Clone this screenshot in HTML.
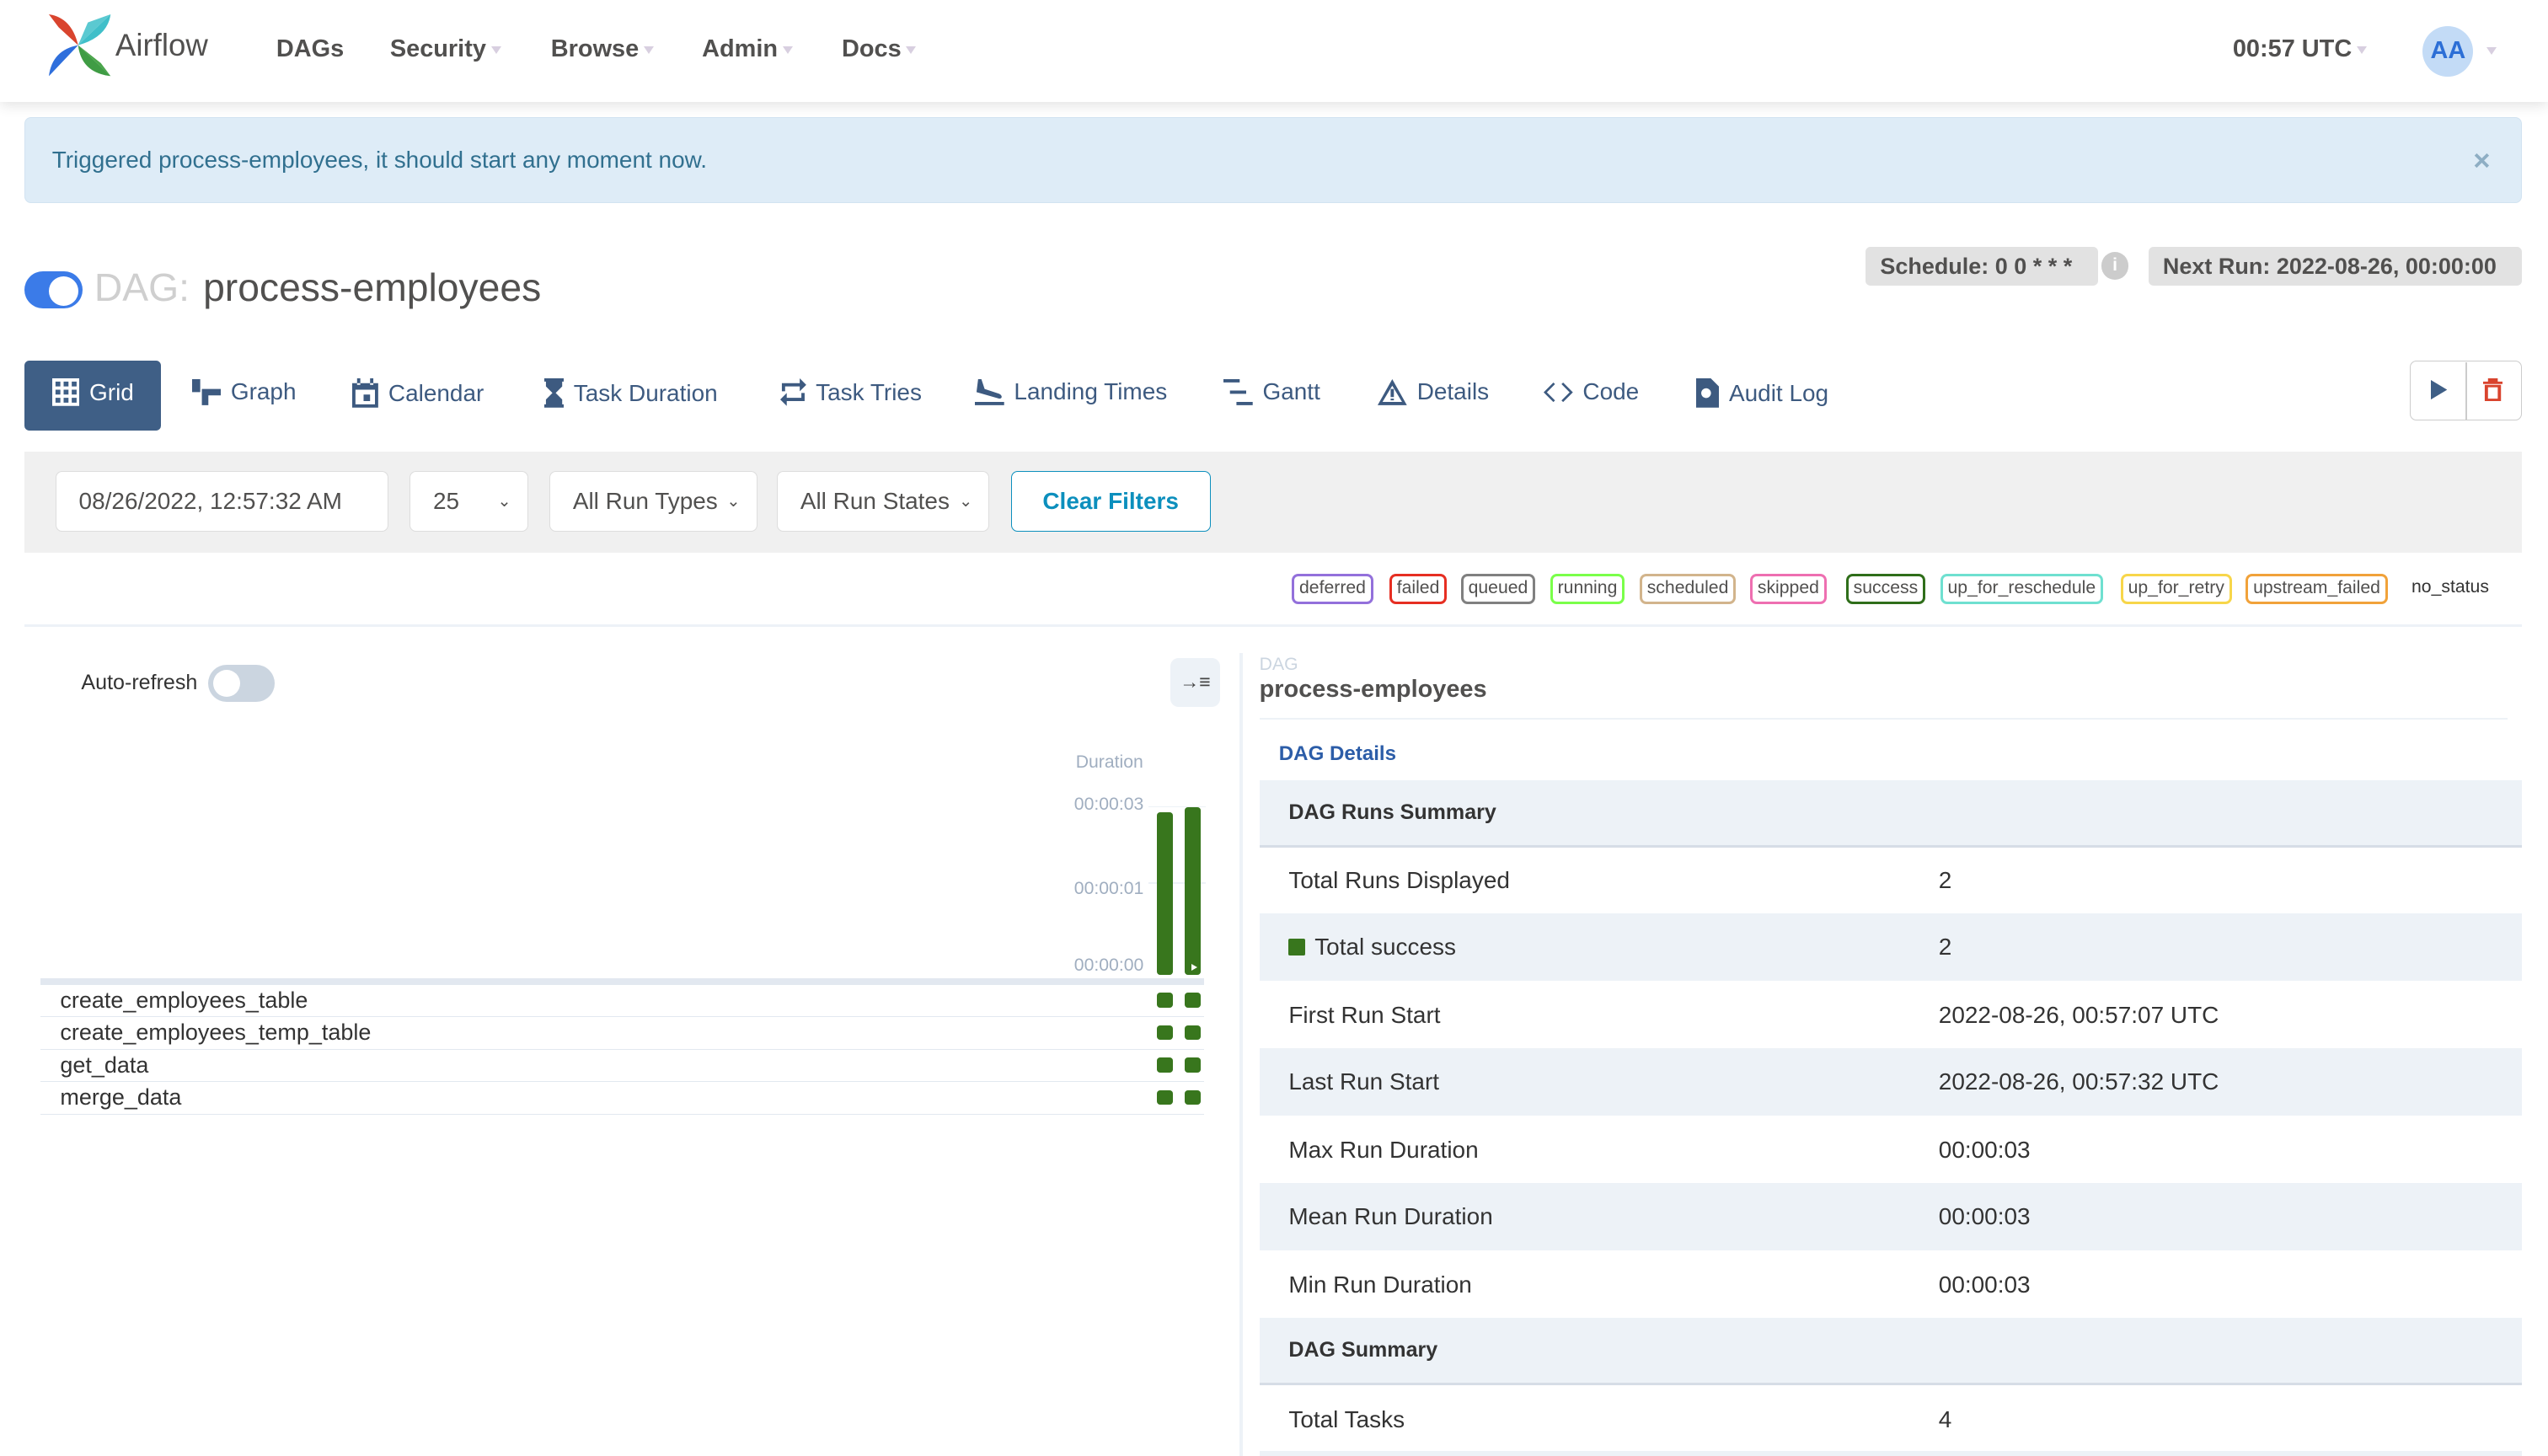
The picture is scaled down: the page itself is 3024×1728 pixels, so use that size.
<!DOCTYPE html>
<html><head><meta charset="utf-8"><style>
*{box-sizing:border-box;margin:0;padding:0}
html,body{width:3024px;height:1728px;overflow:hidden;background:#fff}
#r{zoom:1.92857;width:1568px;height:896px;position:relative;font-family:"Liberation Sans",Arial,sans-serif;color:#51504f}
.a{position:absolute;white-space:nowrap}
.nav{font-size:15px;font-weight:bold;color:#51504f;top:22px}
.car{display:inline-block;width:0;height:0;border-left:3.5px solid transparent;border-right:3.5px solid transparent;border-top:5px solid #d8cfe0;margin-left:3px;vertical-align:middle}
.tab{top:233px;font-size:14.5px;color:#3d5a80;display:flex;align-items:center;gap:6px}
.tab svg{fill:#3d5a80}
.sel{border:1px solid #ddd;border-radius:4px;background:#fff;height:37px;top:290px;font-size:14.5px;color:#51504f;display:flex;align-items:center;padding:0 14px}
.lg{top:353px;height:19px;border:2px solid;border-radius:4px;font-size:11px;padding:0 3px;line-height:15px;color:#51504f}
.row{left:25px;width:716px;height:20px;border-bottom:1px solid #e2e8f0;font-size:14px;color:#333;padding-left:12px;line-height:19px}
.sq{position:absolute;width:10px;height:9px;border-radius:2px;background:#38761d;top:5px}
.tr{left:775px;width:777px;height:41.5px;font-size:14.5px;color:#333;display:flex;align-items:center;padding-left:18px}
.tr.g{background:#edf2f7}
.tr span.v{position:absolute;left:418px}
</style></head><body><div id="r">
<div class="a" style="left:0;top:0;width:1568px;height:63px;background:#fff;box-shadow:0 2px 8px rgba(0,0,0,.12)"></div>
<svg class="a" style="left:30px;top:9px" width="40" height="38" viewBox="0 0 40 38">
<path d="M0 0 L18 19 L9 6 Z" fill="#e04d33"/><path d="M0 0 Q14 2 18 19 L6 8Z" fill="#d9442e"/>
<path d="M38 0 L18 19 L24 5Z" fill="#5bc9d1"/><path d="M38 0 Q36 14 18 19Z" fill="#40bfc9"/>
<path d="M0 38 L18 19 L6 26Z" fill="#3b7ee8"/><path d="M0 38 Q2 22 18 19Z" fill="#2f6fdc"/>
<path d="M38 38 L18 19 L32 30Z" fill="#4aa54a"/><path d="M38 38 Q20 36 18 19Z" fill="#3f9c44"/>
</svg>
<div class="a" style="left:71px;top:17px;font-size:19px;color:#51504f">Airflow</div>
<div class="a nav" style="left:170px">DAGs</div>
<div class="a nav" style="left:240px">Security<span class="car"></span></div>
<div class="a nav" style="left:339px">Browse<span class="car"></span></div>
<div class="a nav" style="left:432px">Admin<span class="car"></span></div>
<div class="a nav" style="left:518px">Docs<span class="car"></span></div>
<div class="a nav" style="left:1374px">00:57 UTC<span class="car"></span></div>
<div class="a" style="left:1491px;top:16px;width:31px;height:31px;border-radius:50%;background:#c3dbf6;color:#2d6fd6;font-weight:bold;font-size:15px;text-align:center;line-height:31px">AA</div>
<span class="a car" style="left:1527px;top:29px"></span>
<div class="a" style="left:15px;top:72px;width:1537px;height:53px;background:#deecf7;border-radius:4px;border:1px solid #d2e3f1"></div>
<div class="a" style="left:32px;top:90px;font-size:14.5px;color:#31708f">Triggered process-employees, it should start any moment now.</div>
<div class="a" style="left:1522px;top:89px;font-size:18px;color:#8eaec4;font-weight:bold">×</div>
<div class="a" style="left:15px;top:167px;width:36px;height:23px;border-radius:12px;background:#3b7be8"></div>
<div class="a" style="left:30px;top:170px;width:18px;height:18px;border-radius:50%;background:#fff"></div>
<div class="a" style="left:58px;top:163px;font-size:24px;color:#cfcfcf">DAG:</div>
<div class="a" style="left:125px;top:163px;font-size:24px;color:#51504f">process-employees</div>
<div class="a" style="left:1148px;top:152px;width:143px;height:24px;background:#e2e2e2;border-radius:3px;font-size:14px;font-weight:bold;color:#51504f;padding-left:9px;line-height:24px">Schedule: 0 0 * * *</div>
<div class="a" style="left:1293px;top:155px;width:17px;height:17px;border-radius:50%;background:#ccc;color:#fff;font-size:11px;font-weight:bold;text-align:center;line-height:17px">i</div>
<div class="a" style="left:1322px;top:152px;width:230px;height:24px;background:#e2e2e2;border-radius:3px;font-size:14px;font-weight:bold;color:#51504f;padding-left:9px;line-height:24px">Next Run: 2022-08-26, 00:00:00</div>
<div class="a" style="left:15px;top:222px;width:84px;height:43px;background:#3f5f86;border-radius:3px"></div>
<div class="a tab" style="left:32px;color:#fff"><svg width="17" height="17" viewBox="0 0 17 17"><path fill="#fff" d="M0 0h17v17H0z M2 2v3h3V2z M7 2v3h3V2z M12 2v3h3V2z M2 7v3h3V7z M7 7v3h3V7z M12 7v3h3V7z M2 12v3h3v-3z M7 12v3h3v-3z M12 12v3h3v-3z" fill-rule="evenodd"/></svg>Grid</div>
<div class="a tab" style="left:118px"><svg width="18" height="16"><path d="M0 0h5v6h13v4h-8v6H6V6H5v2H0z"/></svg>Graph</div>
<div class="a tab" style="left:217px"><svg width="16" height="18"><path d="M0 3h16v15H0z M2 7v9h12V7z M3 0h2v4H3z M11 0h2v4h-2z M7 10h4v4H7z" fill-rule="evenodd"/></svg>Calendar</div>
<div class="a tab" style="left:335px"><svg width="12" height="18"><path d="M0 0h12v2h-1v3L7 9l4 4v3h1v2H0v-2h1v-3l4-4-4-4V2H0z"/></svg>Task Duration</div>
<div class="a tab" style="left:480px"><svg width="16" height="17"><path d="M1 3h11V0l4 4-4 4V5H3v3H1z M15 14H4v3l-4-4 4-4v3h9V9h2z"/></svg>Task Tries</div>
<div class="a tab" style="left:600px"><svg width="18" height="16"><path d="M2 0h2l2 6 9 3c2 1 2 3 0 3L1 8z M0 14h18v2H0z"/></svg>Landing Times</div>
<div class="a tab" style="left:753px"><svg width="18" height="16"><path d="M0 0h10v2H0z M4 7h10v2H4z M8 14h10v2H8z"/></svg>Gantt</div>
<div class="a tab" style="left:848px"><svg width="18" height="16"><path d="M9 0l9 16H0z M9 4L3 14h12z M8 6h2v5H8z M8 12h2v1H8z" fill-rule="evenodd"/></svg>Details</div>
<div class="a tab" style="left:950px"><svg width="18" height="12"><path d="M6 0L0 6l6 6 1-1-5-5 5-5z M12 0l6 6-6 6-1-1 5-5-5-5z"/></svg>Code</div>
<div class="a tab" style="left:1044px"><svg width="14" height="18"><path d="M0 0h9l5 5v13H0z M4 7a3 3 0 1 0 5 3 3 3 0 0 0-5-3z" fill-rule="evenodd"/></svg>Audit Log</div>
<div class="a" style="left:1483px;top:222px;width:69px;height:37px;border:1px solid #ccc;border-radius:4px"></div>
<div class="a" style="left:1517px;top:223px;width:1px;height:35px;background:#ccc"></div>
<svg class="a" style="left:1496px;top:234px" width="10" height="12"><path d="M0 0l10 6-10 6z" fill="#3f5f86"/></svg>
<svg class="a" style="left:1528px;top:233px" width="12" height="14"><path d="M3 0h6v2h3v1.5H0V2h3z M1 4h10v10H1z M3 5.5v7h6v-7z" fill="#d9442e" fill-rule="evenodd"/></svg>
<div class="a" style="left:15px;top:278px;width:1537px;height:62px;background:#f0f0f0"></div>
<div class="a sel" style="left:34px;width:205px">08/26/2022, 12:57:32 AM</div>
<div class="a sel" style="left:252px;width:73px">25<span style="position:absolute;right:10px;font-size:10px">⌄</span></div>
<div class="a sel" style="left:338px;width:128px">All Run Types<span style="position:absolute;right:10px;font-size:10px">⌄</span></div>
<div class="a sel" style="left:478px;width:131px">All Run States<span style="position:absolute;right:10px;font-size:10px">⌄</span></div>
<div class="a sel" style="left:622px;width:123px;border:1px solid #0c8fbd;color:#0c8fbd;font-weight:bold;justify-content:center">Clear Filters</div>
<div class="a lg" style="left:795px;border-color:#9370db">deferred</div>
<div class="a lg" style="left:855px;border-color:#e62e22">failed</div>
<div class="a lg" style="left:899px;border-color:#808080">queued</div>
<div class="a lg" style="left:954px;border-color:#7aff4a">running</div>
<div class="a lg" style="left:1009px;border-color:#d2b48c">scheduled</div>
<div class="a lg" style="left:1077px;border-color:#ee6fb1">skipped</div>
<div class="a lg" style="left:1136px;border-color:#2f6e1a">success</div>
<div class="a lg" style="left:1194px;border-color:#6fe0d0">up_for_reschedule</div>
<div class="a lg" style="left:1305px;border-color:#f7d64a">up_for_retry</div>
<div class="a lg" style="left:1382px;border-color:#f1a23a">upstream_failed</div>
<div class="a" style="left:1484px;top:355px;font-size:11px;color:#333">no_status</div>
<div class="a" style="left:15px;top:384px;width:1537px;height:2px;background:#edf2f7"></div>
<div class="a" style="left:763px;top:402px;width:2px;height:494px;background:#edf2f7"></div>
<div class="a" style="left:50px;top:413px;font-size:13px;color:#333">Auto-refresh</div>
<div class="a" style="left:128px;top:409px;width:41px;height:23px;border-radius:12px;background:#cbd5e0"></div>
<div class="a" style="left:131px;top:412px;width:17px;height:17px;border-radius:50%;background:#fff"></div>
<div class="a" style="left:720px;top:405px;width:31px;height:30px;border-radius:5px;background:#edf2f7;font-size:12px;text-align:center;line-height:30px;color:#444;font-weight:bold">→≡</div>
<div class="a" style="left:662px;top:463px;font-size:11px;color:#a0aec0">Duration</div>
<div class="a" style="left:661px;top:489px;font-size:11px;color:#a0aec0">00:00:03</div>
<div class="a" style="left:661px;top:541px;font-size:11px;color:#a0aec0">00:00:01</div>
<div class="a" style="left:661px;top:588px;font-size:11px;color:#a0aec0">00:00:00</div>
<div class="a" style="left:707px;top:496px;width:35px;height:1px;background:#edf2f7"></div>
<div class="a" style="left:707px;top:543px;width:35px;height:1px;background:#edf2f7"></div>
<div class="a" style="left:712px;top:500px;width:10px;height:100px;border-radius:2px;background:#38761d"></div>
<div class="a" style="left:729px;top:497px;width:10px;height:103px;border-radius:2px;background:#38761d"></div>
<div class="a" style="left:733px;top:593px;width:0;height:0;border-left:4px solid #fff;border-top:2.5px solid transparent;border-bottom:2.5px solid transparent"></div>
<div class="a" style="left:25px;top:602px;width:716px;height:4px;background:#e2e8f0"></div>
<div class="a row" style="top:606px">create_employees_table<i class="sq" style="left:687px"></i><i class="sq" style="left:704px"></i></div>
<div class="a row" style="top:626px">create_employees_temp_table<i class="sq" style="left:687px"></i><i class="sq" style="left:704px"></i></div>
<div class="a row" style="top:646px">get_data<i class="sq" style="left:687px"></i><i class="sq" style="left:704px"></i></div>
<div class="a row" style="top:666px">merge_data<i class="sq" style="left:687px"></i><i class="sq" style="left:704px"></i></div>
<div class="a" style="left:775px;top:403px;font-size:11px;color:#cbd5e0">DAG</div>
<div class="a" style="left:775px;top:416px;font-size:15px;font-weight:bold;color:#51504f">process-employees</div>
<div class="a" style="left:775px;top:442px;width:768px;height:1px;background:#edf2f7"></div>
<div class="a" style="left:787px;top:457px;font-size:12.5px;font-weight:bold;color:#2c5da8">DAG Details</div>
<div class="a tr g" style="top:480px;font-size:13px;font-weight:bold;border-bottom:2px solid #d6dde6">DAG Runs Summary</div>
<div class="a tr" style="top:521px">Total Runs Displayed<span class="v">2</span></div>
<div class="a tr g" style="top:562px"><i style="width:10px;height:10px;background:#38761d;border-radius:1px;margin-right:6px;display:inline-block"></i>Total success<span class="v">2</span></div>
<div class="a tr" style="top:604px">First Run Start<span class="v">2022-08-26, 00:57:07 UTC</span></div>
<div class="a tr g" style="top:645px">Last Run Start<span class="v">2022-08-26, 00:57:32 UTC</span></div>
<div class="a tr" style="top:687px">Max Run Duration<span class="v">00:00:03</span></div>
<div class="a tr g" style="top:728px">Mean Run Duration<span class="v">00:00:03</span></div>
<div class="a tr" style="top:770px">Min Run Duration<span class="v">00:00:03</span></div>
<div class="a tr g" style="top:811px;font-size:13px;font-weight:bold;border-bottom:2px solid #d6dde6">DAG Summary</div>
<div class="a tr" style="top:853px">Total Tasks<span class="v">4</span></div>
<div class="a" style="left:775px;top:893px;width:777px;height:3px;background:#edf2f7"></div>
</div></body></html>
